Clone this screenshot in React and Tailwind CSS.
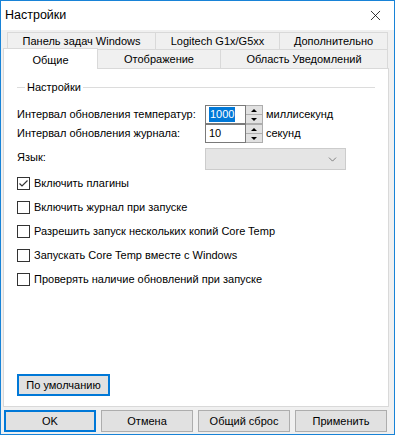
import { X, ChevronDown } from "lucide-react";

const font = { fontFamily: '"Liberation Sans", Arial, sans-serif' };

function Spin({ value, selected }) {
  return (
    <div className="flex h-[19px]">
      <div className="w-[41px] border border-[#7a7a7a] bg-white flex items-center pl-[3px]">
        {selected ? (
          <span className="bg-[#0078d7] text-white leading-[15px] px-[1px]">{value}</span>
        ) : (
          <span className="leading-[15px]">{value}</span>
        )}
      </div>
      <div className="w-[17px] flex flex-col border-y border-r border-[#adadad] bg-[#f0f0f0]">
        <div className="flex-1 flex items-center justify-center border-b border-[#adadad] bg-[#e1e1e1]">
          <div className="w-0 h-0 border-x-[3px] border-x-transparent border-b-[3px] border-b-black" />
        </div>
        <div className="flex-1 flex items-center justify-center bg-[#e1e1e1]">
          <div className="w-0 h-0 border-x-[3px] border-x-transparent border-t-[3px] border-t-black" />
        </div>
      </div>
    </div>
  );
}

function Check({ checked, label }) {
  return (
    <div className="flex items-center h-[14px]">
      <div className="w-[13px] h-[13px] border border-[#333] bg-white flex items-center justify-center">
        {checked && (
          <svg width="11" height="11" viewBox="0 0 11 11">
            <path d="M1.5 5.5 L4 8 L9.5 2.5" fill="none" stroke="#333" strokeWidth="1.2" />
          </svg>
        )}
      </div>
      <span className="ml-[3px] border border-transparent leading-[14px]">{label}</span>
    </div>
  );
}

function Button({ children, primary, className = "" }) {
  return (
    <div
      className={`h-[22px] flex items-center justify-center bg-[#e1e1e1] ${
        primary ? "border-2 border-[#0078d7]" : "border border-[#adadad]"
      } ${className}`}
    >
      {children}
    </div>
  );
}

export default function App() {
  return (
    <div className="w-[395px] h-[435px] bg-[#f0f0f0] border border-[#1883d7] text-[11px] text-black flex flex-col whitespace-nowrap" style={font}>
      <div className="h-[29px] bg-white flex items-center justify-between pl-[4px] pr-[10px]">
        <span className="text-[12.5px]">Настройки</span>
        <X size={17} strokeWidth={1.1} />
      </div>

      <div className="flex-1 flex flex-col px-[2px] pt-[2px]">
        <div className="flex h-[17px] ml-[4px] mr-[4px]">
          <div className="w-[149px] border border-[#d9d9d9] border-b-0 flex items-center justify-center">Панель задач Windows</div>
          <div className="w-[124px] border-t border-r border-[#d9d9d9] flex items-center justify-center">Logitech G1x/G5xx</div>
          <div className="flex-1 border-t border-r border-[#d9d9d9] flex items-center justify-center">Дополнительно</div>
        </div>
        <div className="flex h-[20px] items-end mr-[4px] relative z-10">
          <div className="w-[95px] h-[21px] bg-white border border-[#d9d9d9] border-b-0 flex items-start justify-center pt-[3px]">Общие</div>
          <div className="w-[123px] h-[20px] border-t border-r border-[#d9d9d9] flex items-center justify-center">Отображение</div>
          <div className="flex-1 h-[20px] border-t border-r border-[#d9d9d9] flex items-center justify-center">Область Уведомлений</div>
        </div>

        <div className="mr-[3px] h-[339px] bg-white border border-[#d9d9d9] -mt-px flex flex-col px-[13px]">
          <div className="mt-[11px] flex items-center h-[14px]">
            <div className="w-[8px] h-px bg-[#dcdcdc]" />
            <span className="px-[2px]">Настройки</span>
            <div className="flex-1 h-px bg-[#dcdcdc]" />
          </div>

          <div className="mt-[11px] flex items-center">
            <span className="w-[188px]">Интервал обновления температур:</span>
            <Spin value="1000" selected />
            <span className="ml-[3px]">миллисекунд</span>
          </div>
          <div className="flex items-center">
            <span className="w-[188px]">Интервал обновления журнала:</span>
            <Spin value="10" />
            <span className="ml-[3px]">секунд</span>
          </div>
          <div className="mt-[5px] flex items-center">
            <span className="w-[188px] -mt-[3px]">Язык:</span>
            <div className="w-[141px] h-[22px] bg-[#e5e5e5] border border-[#cccccc] flex items-center justify-end pr-[6px]">
              <ChevronDown size={13} strokeWidth={1.3} color="#555" />
            </div>
          </div>

          <div className="mt-[6px] flex flex-col gap-[10px]">
            <Check checked label="Включить плагины" />
            <Check label="Включить журнал при запуске" />
            <Check label="Разрешить запуск нескольких копий Core Temp" />
            <Check label="Запускать Core Temp вместе с Windows" />
            <Check label="Проверять наличие обновлений при запуске" />
          </div>

          <div className="flex-1" />
          <Button primary className="w-[93px] mb-[10px]">По умолчанию</Button>
        </div>

        <div className="flex gap-[5px] mt-[3px] pl-[1px] pr-[5px]">
          <Button primary className="w-[93px]">OK</Button>
          <Button className="w-[93px]">Отмена</Button>
          <Button className="w-[93px]">Общий сброс</Button>
          <Button className="w-[93px]">Применить</Button>
        </div>
      </div>
    </div>
  );
}
